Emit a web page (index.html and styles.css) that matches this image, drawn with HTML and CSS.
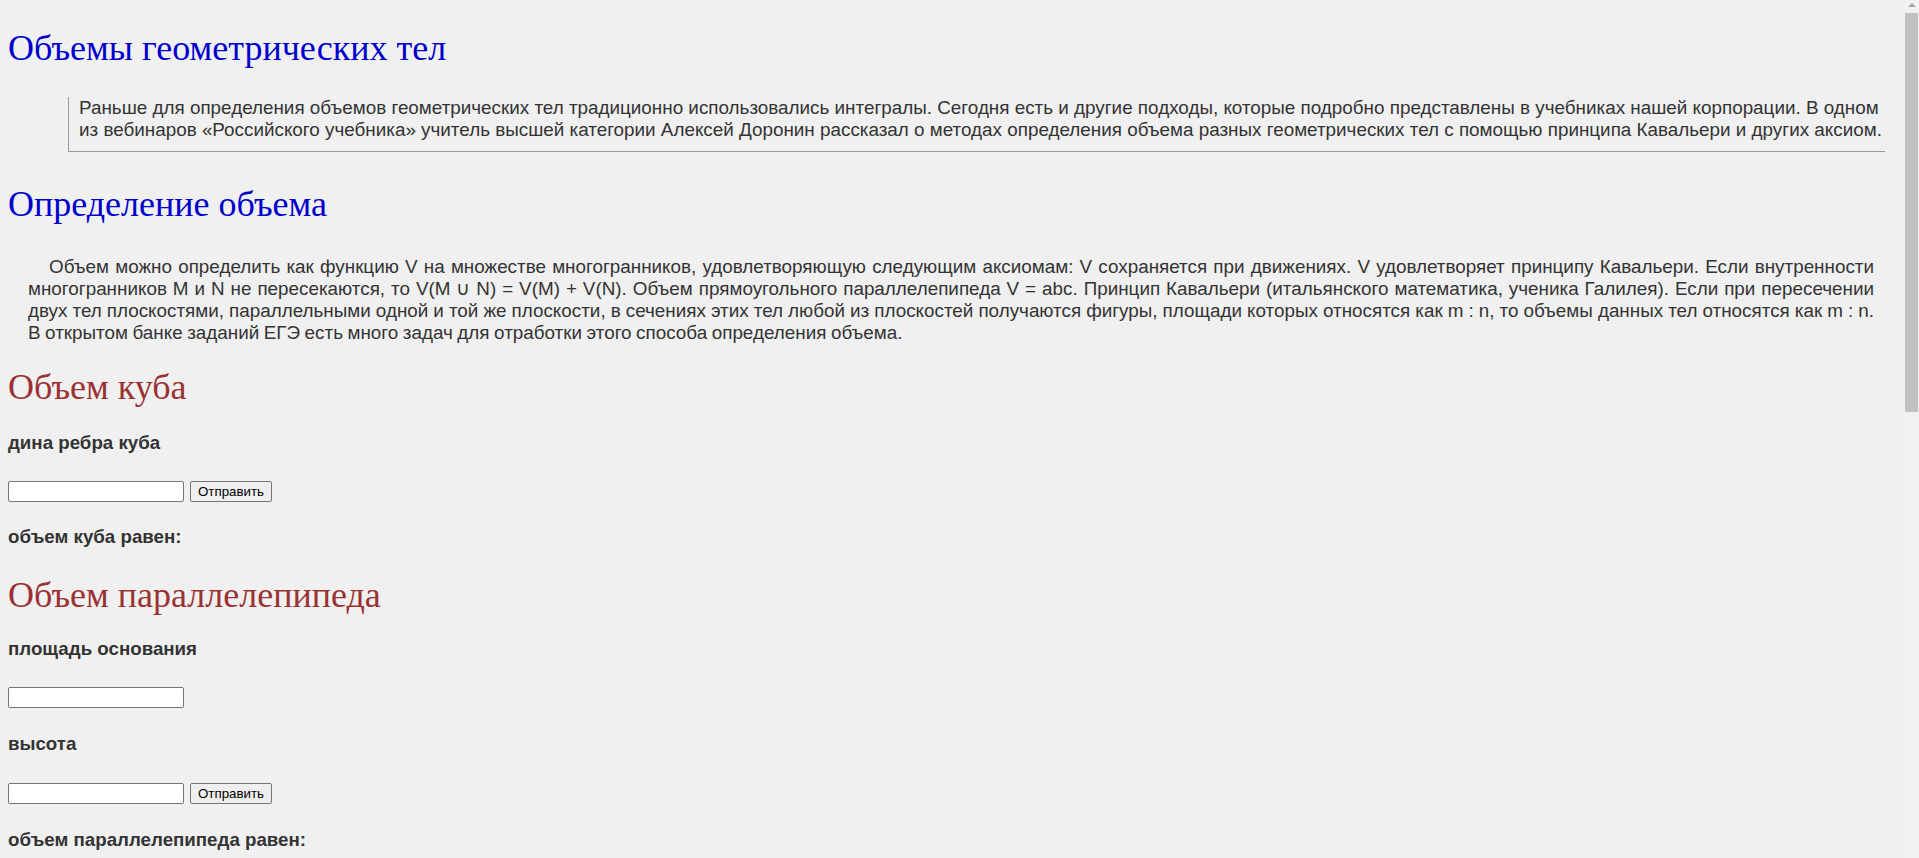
FILE: index.html
```html
<!DOCTYPE html>
<html lang="ru">
<head>
<meta charset="utf-8">
<title>Объемы геометрических тел</title>
<link rel="stylesheet" href="styles.css">
</head>
<body>
<div class="shell">
  <main class="page">
    <h1 class="title">Объемы геометрических тел</h1>
    <blockquote class="lead">Раньше для определения объемов геометрических тел традиционно использовались интегралы. Сегодня есть и другие подходы, которые подробно представлены в учебниках нашей корпорации. В одном из вебинаров «Российского учебника» учитель высшей категории Алексей Доронин рассказал о методах определения объема разных геометрических тел с помощью принципа Кавальери и других аксиом.</blockquote>

    <h2 class="section section-blue s-def">Определение объема</h2>
    <p class="text">Объем можно определить как функцию V на множестве многогранников, удовлетворяющую следующим аксиомам: V сохраняется при движениях. V удовлетворяет принципу Кавальери. Если внутренности многогранников M и N не пересекаются, то V(M ∪ N) = V(M) + V(N). Объем прямоугольного параллелепипеда V = abc. Принцип Кавальери (итальянского математика, ученика Галилея). Если при пересечении двух тел плоскостями, параллельными одной и той же плоскости, в сечениях этих тел любой из плоскостей получаются фигуры, площади которых относятся как m : n, то объемы данных тел относятся как m : n. В открытом банке заданий ЕГЭ есть много задач для отработки этого способа определения объема.</p>

    <h2 class="section section-brown s-cube">Объем куба</h2>
    <h3 class="label l-cube">дина ребра куба</h3>
    <form class="row r-cube" onsubmit="return false;">
      <input class="field" type="text">
      <button class="btn" type="submit">Отправить</button>
    </form>
    <h3 class="label l-cube-res">объем куба равен:</h3>

    <h2 class="section section-brown s-box">Объем параллелепипеда</h2>
    <h3 class="label l-base">площадь основания</h3>
    <form class="row r-base" onsubmit="return false;">
      <input class="field" type="text">
    </form>
    <h3 class="label l-height">высота</h3>
    <form class="row r-height" onsubmit="return false;">
      <input class="field" type="text">
      <button class="btn" type="submit">Отправить</button>
    </form>
    <h3 class="label l-box-res">объем параллелепипеда равен:</h3>
  </main>
  <div class="scrollbar">
    <div class="sb-up"><span class="sb-arrow"></span></div>
    <div class="sb-thumb"></div>
  </div>
</div>
</body>
</html>
```
FILE: styles.css
```css
html, body {
  margin: 0;
  padding: 0;
  height: 100%;
  overflow: hidden;
  background: #f0f0f0;
}

.shell {
  display: grid;
  grid-template-columns: 1fr 17px;
  height: 100vh;
}

.page {
  padding: 0 8px;
  min-width: 0;
  font-family: "Liberation Sans", Arial, sans-serif;
  color: #333;
  font-size: 18.85px;
}

.title {
  margin: 27px 0 0;
  font-family: "Liberation Serif", "Times New Roman", serif;
  font-weight: normal;
  font-size: 36px;
  line-height: 42px;
  color: #0000cd;
}

.lead {
  margin: 28px 9px 0 60px;
  padding: 0 0 10px 10px;
  border-left: 1px solid #999;
  border-bottom: 1px solid #999;
  line-height: normal;
}

.section {
  margin: 0;
  font-family: "Liberation Serif", "Times New Roman", serif;
  font-weight: normal;
  font-size: 36px;
  line-height: 42px;
}

.section-blue { color: #0000cd; }
.section-brown { color: #9b3232; }

.s-def { margin-top: 31px; }
.s-cube { margin-top: 22px; }
.s-box { margin-top: 26px; }

.text {
  margin: 31px 20px 0;
  text-align: justify;
  text-indent: 21px;
  word-spacing: -0.7px;
  line-height: normal;
}

.label {
  margin: 0;
  font-size: 18.72px;
  font-weight: bold;
  line-height: normal;
  color: #333;
}

.l-cube { margin-top: 24px; }
.l-cube-res { margin-top: 24px; }
.l-base { margin-top: 22px; }
.l-height { margin-top: 25px; }
.l-box-res { margin-top: 25px; }

.row {
  display: flex;
  align-items: center;
  gap: 6px;
  margin: 27px 0 0;
  height: 21px;
}

.r-cube { margin-top: 27px; }
.r-height { margin-top: 28px; }

.field {
  box-sizing: border-box;
  width: 176px;
  height: 21px;
  margin: 0;
  padding: 1px 2px;
  border: 1px solid #767676;
  border-radius: 2px;
  background: #fff;
  font-family: "Liberation Sans", Arial, sans-serif;
  font-size: 13.33px;
}

.btn {
  box-sizing: border-box;
  width: 82px;
  height: 21px;
  margin: 0;
  padding: 0 6px;
  border: 1px solid #767676;
  border-radius: 2px;
  background: #efefef;
  color: #000;
  font-family: "Liberation Sans", Arial, sans-serif;
  font-size: 13.33px;
  line-height: 19px;
}

.scrollbar {
  display: flex;
  flex-direction: column;
  background: #f1f1f1;
}

.sb-up {
  height: 13px;
  display: flex;
  justify-content: center;
  padding-top: 3px;
  box-sizing: border-box;
}

.sb-arrow {
  width: 0;
  height: 0;
  margin-left: 2px;
  border-left: 4px solid transparent;
  border-right: 4px solid transparent;
  border-bottom: 4px solid #a3a3a3;
}

.sb-thumb {
  height: 399px;
  margin: 0 1px 0 3px;
  background: #c1c1c1;
}
```
